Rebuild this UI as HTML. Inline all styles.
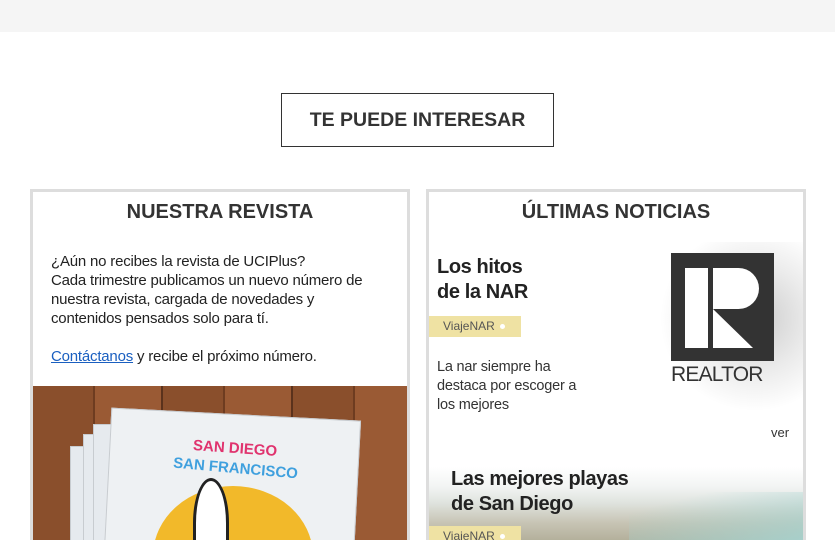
<!DOCTYPE html>
<html><head><meta charset="utf-8"><style>
*{margin:0;padding:0;box-sizing:border-box}
html,body{width:835px;height:540px;overflow:hidden}
body{background:#fff;font-family:"Liberation Sans",sans-serif;color:#333;position:relative}
.top{position:absolute;left:0;top:0;width:835px;height:32px;background:#f5f5f5}
.btn{position:absolute;left:281px;top:93px;width:273px;height:54px;border:1px solid #333;text-align:center;line-height:52px;font-size:19.5px;font-weight:bold;color:#333}
.card{position:absolute;top:189px;height:351px;border:3px solid #ddd;border-bottom:0;overflow:hidden}
.l{left:30px;width:380px}.r{left:426px;width:380px}
.h{position:absolute;top:9px;left:0;width:100%;text-align:center;font-size:20px;font-weight:bold;color:#333}
.p{position:absolute;left:18px;top:60px;font-size:15px;line-height:19px;color:#222;letter-spacing:-.2px}
.p a{color:#1a5fc0;text-decoration:underline}
.img{position:absolute;left:0;top:194px;width:380px;height:160px;background:repeating-linear-gradient(90deg,#8a4f2c 0 60px,#6e3c20 60px 62px,#9a5a34 62px 128px,#5b321c 128px 130px);}
.mag{position:absolute;background:#e6eaee;border:1px solid #c8ccd0}
.t{position:absolute;font-weight:bold;font-size:20px;line-height:25px;color:#222;letter-spacing:-.4px}
.tag{position:absolute;left:0;width:92px;height:21px;background:#efe2a3;font-size:12px;line-height:21px;padding-left:14px;color:#555}
.tag:after{content:"";position:absolute;right:16px;top:8px;width:5px;height:5px;border-radius:50%;background:#fff}
</style></head><body>
<div class="top"></div>
<div class="btn">TE PUEDE INTERESAR</div>
<div class="card l">
<div class="h">NUESTRA REVISTA</div>
<div class="p">¿Aún no recibes la revista de UCIPlus?<br>Cada trimestre publicamos un nuevo número de<br>nuestra revista, cargada de novedades y<br>contenidos pensados solo para tí.<br><br><a>Contáctanos</a> y recibe el próximo número.</div>
<div class="img">
<div class="mag" style="left:37px;top:60px;width:250px;height:200px"></div>
<div class="mag" style="left:50px;top:48px;width:250px;height:200px"></div>
<div class="mag" style="left:60px;top:38px;width:250px;height:200px"></div>
<div class="mag" style="left:73px;top:28px;width:250px;height:200px;background:#eef1f3;transform:rotate(3deg)"></div>
<div style="position:absolute;left:120px;top:100px;width:160px;height:140px;border-radius:50%;background:#f2b92a"></div>
<div style="position:absolute;left:160px;top:54px;font-weight:bold;font-size:15px;color:#e0336e;transform:rotate(4deg)">SAN DIEGO</div>
<div style="position:absolute;left:140px;top:74px;font-weight:bold;font-size:15px;color:#3fa0de;transform:rotate(5deg)">SAN FRANCISCO</div>
<div style="position:absolute;left:160px;top:92px;width:36px;height:90px;border:3px solid #222;border-radius:50% 50% 0 0;background:#fff"></div>
</div>
</div>
<div class="card r">
<div class="h">ÚLTIMAS NOTICIAS</div>
<div class="t" style="left:8px;top:63px">Los hitos<br>de la NAR</div>
<div class="tag" style="top:124px">ViajeNAR</div>
<div style="position:absolute;left:8px;top:166px;font-size:14.5px;line-height:19px;color:#333;letter-spacing:-.2px">La nar siempre ha<br>destaca por escoger a<br>los mejores</div>
<div style="position:absolute;left:230px;top:50px;width:160px;height:170px;background:radial-gradient(ellipse at 60% 45%,rgba(0,0,0,.2) 0,rgba(0,0,0,.08) 40%,rgba(0,0,0,0) 70%)"></div>
<div style="position:absolute;left:242px;top:61px;width:103px;height:108px;background:#333">
<div style="position:absolute;left:14px;top:15px;width:23px;height:80px;background:#fff"></div>
<div style="position:absolute;left:42px;top:15px;width:46px;height:41px;background:#fff;border-radius:0 22px 22px 0"></div>
<svg style="position:absolute;left:42px;top:56px" width="46" height="39"><polygon points="0,0 0,39 40,39" fill="#fff"/></svg>
</div>
<div style="position:absolute;left:242px;top:171px;font-size:21px;color:#333;letter-spacing:-.8px">REALTOR</div>
<div style="position:absolute;left:342px;top:233px;font-size:13px;color:#333">ver</div>
<div style="position:absolute;left:0;top:275px;width:380px;height:80px;background:linear-gradient(180deg,#fff 0,#f2f4f3 25%,#dfe3de 45%,#c7c4b4 70%,#aca892 100%)"></div>
<div style="position:absolute;left:200px;top:300px;width:180px;height:55px;background:linear-gradient(165deg,rgba(220,235,235,0) 20%,#a6d3d0)"></div>
<div class="t" style="left:22px;top:275px">Las mejores playas<br>de San Diego</div>
<div class="tag" style="top:334px">ViajeNAR</div>
</div>
</body></html>
